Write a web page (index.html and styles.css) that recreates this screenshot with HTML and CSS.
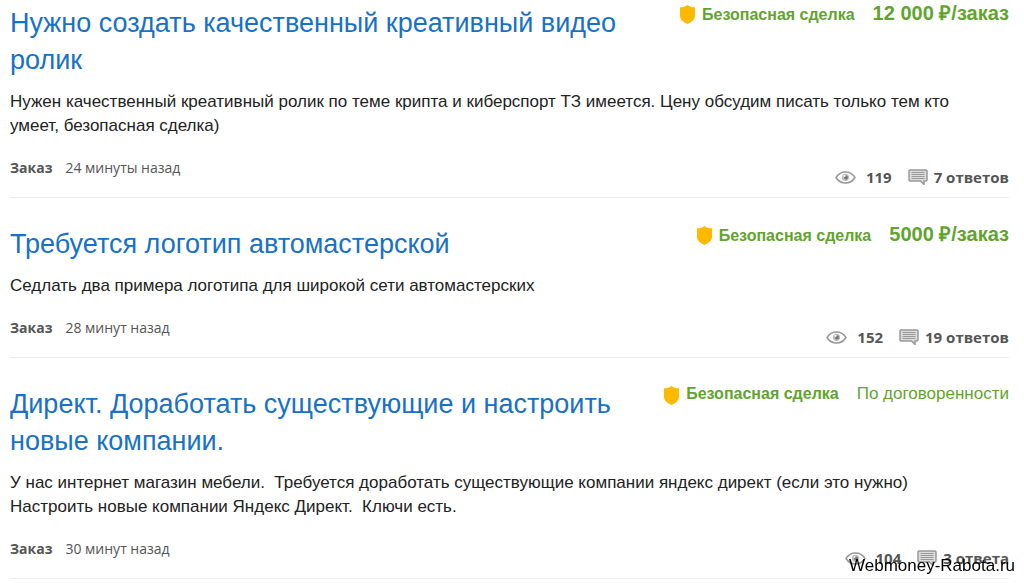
FILE: index.html
```html
<!DOCTYPE html>
<html lang="ru">
<head>
    <meta charset="UTF-8">
    <meta name="viewport" content="width=device-width, initial-scale=1.0">
    <title>Заказы</title>
    <link rel="stylesheet" href="styles.css">
</head>
<body>
    <svg class="sprite" aria-hidden="true">
        <symbol id="shield" viewBox="0 0 15 19">
            <path fill="#ffba00" d="M7.5 0C5.500 1.700 3 2.300 0 2.300V11c0 3.800 3.500 6 7.500 8 4-2 7.500-4.200 7.500-8V2.300C12 2.300 9.500 1.700 7.500 0z"/>
        </symbol>
        <symbol id="eye" viewBox="0 0 21 13">
            <path fill="#fff" stroke="#999" stroke-width="1.500" d="M1 6.500C3.500 2.500 7 1 10.500 1s7 1.500 9.500 5.500c-2.500 4-6 5.500-9.500 5.500S3.500 10.500 1 6.500z"/>
            <circle cx="10.500" cy="6.300" r="3.600" fill="#bbb"/>
            <circle cx="11" cy="6.500" r="2" fill="#777"/>
            <circle cx="9.500" cy="5" r="1" fill="#fff"/>
        </symbol>
        <symbol id="bubble" viewBox="0 0 20 16">
            <path fill="#ddd" stroke="#999" stroke-width="1.500" d="M2 1h16q1 0 1 1v9q0 1-1 1h-2v3.500L12.500 12H2q-1 0-1-1V2q0-1 1-1z"/>
            <path stroke="#999" d="M3.500 3.500h13M3.500 5.500h13M3.500 7.500h13M3.500 9.500h13"/>
        </symbol>
    </svg>
    <main class="orders">
        <article class="order">
            <div class="order-head">
                <h2><a href="#">Нужно создать качественный креативный видео ролик</a></h2>
                <div class="deal"><svg class="shield"><use href="#shield"/></svg><span class="safe">Безопасная сделка</span><span class="price">12 000 ₽/заказ</span></div>
            </div>
            <p>Нужен качественный креативный ролик по теме крипта и киберспорт ТЗ имеется. Цену обсудим писать только тем кто умеет, безопасная сделка)</p>
            <div class="order-foot">
                <div class="posted"><b>Заказ</b><span>24 минуты назад</span></div>
                <div class="stats"><svg class="eye"><use href="#eye"/></svg><span>119</span><svg class="bubble"><use href="#bubble"/></svg><a href="#">7 ответов</a></div>
            </div>
        </article>
        <article class="order">
            <div class="order-head">
                <h2><a href="#">Требуется логотип автомастерской</a></h2>
                <div class="deal"><svg class="shield"><use href="#shield"/></svg><span class="safe">Безопасная сделка</span><span class="price">5000 ₽/заказ</span></div>
            </div>
            <p>Седлать два примера логотипа для широкой сети автомастерских</p>
            <div class="order-foot">
                <div class="posted"><b>Заказ</b><span>28 минут назад</span></div>
                <div class="stats"><svg class="eye"><use href="#eye"/></svg><span>152</span><svg class="bubble"><use href="#bubble"/></svg><a href="#">19 ответов</a></div>
            </div>
        </article>
        <article class="order">
            <div class="order-head">
                <h2><a href="#">Директ. Доработать существующие и настроить новые компании.</a></h2>
                <div class="deal"><svg class="shield"><use href="#shield"/></svg><span class="safe">Безопасная сделка</span><span class="price by-agreement">По договоренности</span></div>
            </div>
            <p>У нас интернет магазин мебели.&nbsp; Требуется доработать существующие компании яндекс директ (если это нужно)<br>Настроить новые компании Яндекс Директ.&nbsp; Ключи есть.</p>
            <div class="order-foot">
                <div class="posted"><b>Заказ</b><span>30 минут назад</span></div>
                <div class="stats"><svg class="eye"><use href="#eye"/></svg><span>104</span><svg class="bubble"><use href="#bubble"/></svg><a href="#">3 ответа</a></div>
            </div>
        </article>
    </main>
    <div class="watermark">Webmoney-Rabota.ru</div>
</body>
</html>
```

FILE: styles.css
```css
body {
    margin: 0;
    background: #fff;
    color: #222;
    font-family: "Liberation Sans", Arial, sans-serif;
    font-size: 17px;
}
a {
    color: inherit;
    text-decoration: none;
}
.sprite {
    display: none;
}
.orders {
    padding: 0 15px 0 10px;
}
.order {
    padding-top: 28px;
    border-bottom: 1px solid #eee;
}
.order:first-child {
    padding-top: 5px;
}
.order-head {
    display: flex;
    justify-content: space-between;
    align-items: flex-start;
}
h2 {
    flex: 0 1 610px;
    margin: 0;
    color: #1771c6;
    font-size: 27px;
    font-weight: normal;
    line-height: 37px;
}
.deal {
    display: flex;
    align-items: baseline;
    color: #5fa52d;
    line-height: 16px;
    white-space: nowrap;
}
.shield {
    align-self: center;
    width: 15px;
    height: 19px;
    margin-right: 7px;
}
.safe {
    margin-right: 18px;
    font-size: 16px;
    font-weight: bold;
}
.price {
    font-size: 20px;
    font-weight: bold;
}
.by-agreement {
    font-size: 17px;
    font-weight: normal;
}
p {
    margin: 11px 0 20px;
    padding-right: 20px;
    line-height: 24px;
}
.order-foot {
    display: flex;
    justify-content: space-between;
    align-items: flex-start;
    padding-bottom: 11px;
    color: #555;
    font-family: "Open Sans", sans-serif;
    font-size: 14px;
}
.posted {
    display: flex;
    gap: 13px;
}
.stats {
    display: flex;
    align-items: center;
    padding-top: 10px;
    font-size: 15px;
    font-weight: bold;
    line-height: 18px;
}
.eye {
    width: 21px;
    height: 13px;
    margin-right: 10px;
}
.bubble {
    width: 20px;
    height: 16px;
    margin: 0 6px 0 16px;
}
.watermark {
    position: fixed;
    right: 9px;
    bottom: 7px;
    color: #000;
    font-size: 17px;
}
```
